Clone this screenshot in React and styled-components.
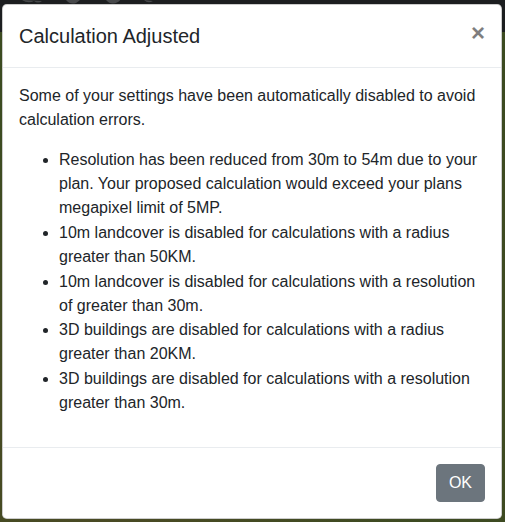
import React from "react";
import styled, { createGlobalStyle } from "styled-components";

const Global = createGlobalStyle`
  html, body { margin: 0; padding: 0; }
  body {
    font-family: "Liberation Sans", Arial, sans-serif;
    background: #1c1e20;
  }
  * { box-sizing: border-box; }
`;

const Backdrop = styled.div`
  position: relative;
  width: 505px;
  height: 522px;
  overflow: hidden;
  padding: 4px 3px 0 2px;
  background:
    linear-gradient(to bottom, #1c1e20 0px, #1c1e20 32px, transparent 32px),
    radial-gradient(ellipse at 20% 90%, #4b4a24 0%, transparent 55%),
    radial-gradient(ellipse at 85% 70%, #3f4a22 0%, transparent 60%),
    #3c4b21;
`;

const MapBlobs = styled.svg`
  position: absolute;
  left: 0;
  top: 0;
  width: 505px;
  height: 32px;
`;

const Modal = styled.div`
  position: relative;
  width: 500px;
  background: #fff;
  border: 1px solid rgba(0, 0, 0, 0.2);
  border-radius: 4.8px;
  color: #212529;
  font-size: 16px;
  line-height: 1.5;
  display: flex;
  flex-direction: column;
`;

const Header = styled.div`
  display: flex;
  align-items: flex-start;
  justify-content: space-between;
  padding: 16px;
  border-bottom: 1px solid #e9ecef;
`;

const Title = styled.h5`
  margin: 0;
  font-size: 20px;
  font-weight: 500;
  line-height: 1.5;
`;

const Close = styled.button`
  padding: 16px;
  margin: -16px -16px -16px auto;
  background: transparent;
  border: 0;
  font-family: "Liberation Sans", Arial, sans-serif;
  font-size: 24px;
  font-weight: 700;
  line-height: 1;
  color: #000;
  opacity: 0.5;
  cursor: pointer;
`;

const Body = styled.div`
  padding: 16px;
`;

const Para = styled.p`
  margin: 0 0 16px;
`;

const List = styled.ul`
  margin: 0 0 16px;
  padding-left: 40px;
`;

const Item = styled.li`
  & + & {
    margin-top: 0.75px;
  }
`;

const Footer = styled.div`
  display: flex;
  justify-content: flex-end;
  align-items: center;
  padding: 16px;
  border-top: 1px solid #e9ecef;
`;

const Button = styled.button`
  font-family: "Liberation Sans", Arial, sans-serif;
  font-size: 16px;
  line-height: 1.5;
  padding: 6px 12px;
  color: #fff;
  background: #6c757d;
  border: 1px solid #6c757d;
  border-radius: 4px;
  cursor: pointer;
`;

const items = [
  "Resolution has been reduced from 30m to 54m due to your plan. Your proposed calculation would exceed your plans megapixel limit of 5MP.",
  "10m landcover is disabled for calculations with a radius greater than 50KM.",
  "10m landcover is disabled for calculations with a resolution of greater than 30m.",
  "3D buildings are disabled for calculations with a radius greater than 20KM.",
  "3D buildings are disabled for calculations with a resolution greater than 30m.",
];

export default function App() {
  return (
    <>
      <Global />
      <Backdrop>
        <MapBlobs viewBox="0 0 505 32">
          <g fill="#5a5c5e" opacity="0.7">
            <path d="M22 0 q6 4 12 1 q4 3 8 0 z" />
            <path d="M66 0 q4 5 10 3 q3 -2 4 -3 z" />
            <path d="M106 0 q5 6 12 2 q2 -1 2 -2 z" />
            <path d="M144 0 q4 4 9 1 z" />
          </g>
        </MapBlobs>
        <Modal>
          <Header>
            <Title>Calculation Adjusted</Title>
            <Close aria-label="Close">×</Close>
          </Header>
          <Body>
            <Para>
              Some of your settings have been automatically disabled to avoid
              calculation errors.
            </Para>
            <List>
              {items.map((t) => (
                <Item key={t}>{t}</Item>
              ))}
            </List>
          </Body>
          <Footer>
            <Button>OK</Button>
          </Footer>
        </Modal>
      </Backdrop>
    </>
  );
}
